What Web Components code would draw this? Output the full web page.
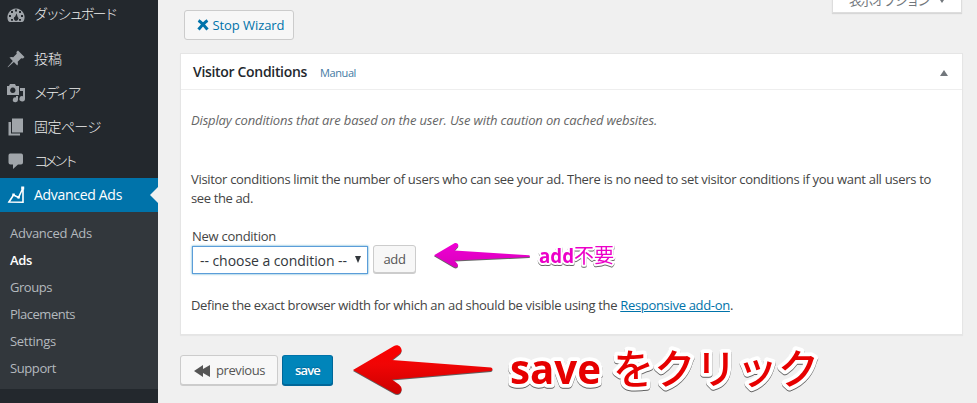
<!DOCTYPE html>
<html lang="ja">
<head>
<meta charset="utf-8">
<title>Visitor Conditions</title>
<style>
html,body{margin:0;height:100%;overflow:hidden;background:#f0f0f0}
body{font:13px/18px "Open Sans","Noto Sans CJK JP",sans-serif;color:#444}
</style>
</head>
<body>
<wizard-page></wizard-page>
<script>
const define = (name, html, setup) => customElements.define(name, class extends HTMLElement {
  constructor() {
    super();
    this.attachShadow({mode: 'open'}).innerHTML = html;
  }
  connectedCallback() { if (setup) setup(this, this.shadowRoot); }
});

/* A run of text whose tracking is adjusted to fill the width in "w". */
define('fit-text', `<style>:host{display:inline-block;white-space:nowrap;vertical-align:top}span{display:inline-block}</style><span><slot></slot></span>`, (el, root) => {
  const span = root.querySelector('span');
  const w = +el.getAttribute('w');
  el.style.width = w + 'px';
  const n = el.textContent.length;
  span.style.letterSpacing = (w - span.getBoundingClientRect().width) / n + 'px';
});

const icons = {
  dashboard: '<path fill-rule="evenodd" d="M2.3 17A8.6 8.6 0 1 1 17.7 17Q17 18 16 18H4Q3 18 2.3 17ZM9 5.4h2v2H9zM5 7h2v2H5zM13 7h2v2h-2zM3 11h2v2H3zM15 11h2v2h-2zM5 15h2v1.7H5zM13 15h2v1.7h-2zM10.6 9.3 9.2 12.5a2.2 2.2 0 1 0 2.5.4Z"/>',
  pin: '<path d="M10.4 3 12 1.5 18.5 8 17 9.6 15.2 9.3 11.7 12.8Q12.4 15 11.3 16.4L7.9 13 2 18.2 1.6 18 6.8 12 3.5 8.6Q5 7.5 7.2 8.2L10.7 4.8Z"/>',
  media: '<path fill-rule="evenodd" d="M1 3h2l1-2h5l1 2h3v9H1ZM6.8 4.6a2.7 2.7 0 1 0 .01 0ZM14 5h5v10.8a2.8 2.6 0 1 1-2-2.5V8h-3ZM10 13h2v3.7a2.6 2.4 0 1 1-2-2.3Z"/>',
  pages: '<path d="M6 1.500h11v14H6zM2.500 5H5v11.500h9v2H2.500z"/>',
  comment: '<path d="M4.2 2.500h11Q17 2.500 17 4.500v7Q17 13.500 15 13.500h-3L7 18v-4.500H4.500Q2.500 13.500 2.500 11.500v-7Q2.500 2.500 4.2 2.500Z"/>',
  chart: '<path fill="none" stroke="currentColor" stroke-width="1.6" d="M3 17 7.500 10l5 2.500L17 3v14.200ZM2 17.200h15.700"/><path d="M6.300 8.500h2.500v2.500H6.300zM11.300 11h2.500v2.500h-2.500zM15.200 1.500h3v3h-3z"/>'
};

define('menu-item', `<style>
:host{display:flex;height:34px;align-items:center;position:relative;color:#eee;font-size:14px;font-family:"Open Sans","Noto Sans CJK JP",sans-serif;flex:none}
:host(:not([current])){font-weight:300}
:host([current]){background:#0073aa;color:#fff}
:host([current])::after{content:"";position:absolute;right:0;top:9px;border:8px solid transparent;border-right-color:#f0f0f0;border-left:0}
svg{width:20px;height:20px;margin-left:6px;margin-right:8px;fill:currentColor;color:#a0a5aa}
:host([current]) svg{color:#fff}
</style><svg viewBox="0 0 20 20"></svg><slot></slot>`, (el, root) => {
  root.querySelector('svg').innerHTML = icons[el.getAttribute('icon')];
});

define('sub-item', `<style>
:host{display:block;height:27px;line-height:27px;padding-left:10px;color:#b4b9be;font-size:13px}
:host([current]){color:#fff;font-weight:600}
</style><slot></slot>`);

define('admin-menu', `<style>
:host{display:flex;flex-direction:column;width:158px;height:403px;flex:none;background:#23282d;overflow:hidden}
.gap{height:11px;flex:none}
.first{margin-top:-3px}
.sub{background:#32373c;padding:8px 0 7px}
</style>
<menu-item class="first" icon="dashboard"><fit-text w="82">ダッシュボード</fit-text></menu-item>
<div class="gap"></div>
<menu-item icon="pin"><fit-text w="28">投稿</fit-text></menu-item>
<menu-item icon="media"><fit-text w="45">メディア</fit-text></menu-item>
<menu-item icon="pages"><fit-text w="67">固定ページ</fit-text></menu-item>
<menu-item icon="comment"><fit-text w="40">コメント</fit-text></menu-item>
<menu-item icon="chart" current><fit-text w="88">Advanced Ads</fit-text></menu-item>
<div class="sub">
<sub-item><fit-text w="82">Advanced Ads</fit-text></sub-item>
<sub-item current><fit-text w="22">Ads</fit-text></sub-item>
<sub-item><fit-text w="42">Groups</fit-text></sub-item>
<sub-item><fit-text w="65">Placements</fit-text></sub-item>
<sub-item><fit-text w="46">Settings</fit-text></sub-item>
<sub-item><fit-text w="46">Support</fit-text></sub-item>
</div>`);

define('wp-button', `<style>
:host{display:inline-flex;box-sizing:border-box;align-items:center;justify-content:center;border:1px solid #ccc;border-radius:3px;background:#f7f7f7;box-shadow:0 1px 0 #ccc;color:#555;font-size:13px;flex:none}
:host([primary]){background:#0085ba;border-color:#0073aa #006799 #006799;box-shadow:0 1px 0 #006799;color:#fff;font-weight:600;text-shadow:0 -1px 1px #006799}
:host([link]){color:#0073aa;font-weight:500;box-shadow:none}
</style><slot></slot>`);

define('condition-select', `<style>
:host{display:flex;box-sizing:border-box;width:176px;height:28px;border:1px solid #5b9dd9;box-shadow:0 0 2px rgba(30,140,190,.8);background:#fff;align-items:center;justify-content:space-between;padding:1px 6px 0 7px;font-size:14px;color:#32373c}
i{width:0;border:3.5px solid transparent;border-top:7px solid #32373c;border-bottom:0;margin-bottom:2px}
</style><slot></slot><i></i>`);

define('meta-box', `<style>
:host{display:block;box-sizing:border-box;width:783px;height:282px;background:#fff;border:1px solid #e5e5e5;box-shadow:0 1px 1px rgba(0,0,0,.04)}
header{display:flex;box-sizing:border-box;height:36px;border-bottom:1px solid #eee;align-items:center;padding:0 14px 0 12px}
h2{margin:1px 13px 0 0;font-size:14px;font-weight:550;line-height:18px;color:#23282d}
header a{font-size:11px;color:#447aa3;margin-top:3px;flex:1}
header i{border:4px solid transparent;border-bottom:6px solid #72777c;border-top:0;margin-top:3px}
.body{padding:0 10px}
p{margin:0;line-height:19px}
.note{margin-top:21px;font-style:italic;color:#666}
.intro{margin-top:40px}
.label{margin:19px 0 0 1px;line-height:18px}
.row{display:flex;gap:5px;margin:1px 0 0 1px}
.row wp-button{width:43px;height:28px;margin-top:-1px}
.end{margin-top:22px}
.end a{color:#0073aa;text-decoration:underline}
</style>
<header><h2><fit-text w="114">Visitor Conditions</fit-text></h2><a><fit-text w="36">Manual</fit-text></a><i></i></header>
<div class="body">
<p class="note"><fit-text w="466">Display conditions that are based on the user. Use with caution on cached websites.</fit-text></p>
<p class="intro"><fit-text w="740">Visitor conditions limit the number of users who can see your ad. There is no need to set visitor conditions if you want all users to</fit-text><br><fit-text w="62">see the ad.</fit-text></p>
<p class="label"><fit-text w="84">New condition</fit-text></p>
<div class="row"><condition-select><fit-text w="147">-- choose a condition --</fit-text></condition-select><wp-button><fit-text w="22">add</fit-text></wp-button></div>
<p class="end"><fit-text w="542">Define the exact browser width for which an ad should be visible using the <a>Responsive add-on</a>.</fit-text></p>
</div>`);

define('screen-options', `<style>
:host{display:flex;box-sizing:border-box;width:130px;height:28px;background:#fff;border:1px solid #ddd;border-top:0;box-shadow:0 1px 1px rgba(0,0,0,.1);align-items:center;padding:2px 15px 0 16px;justify-content:space-between;color:#72777c}
i{border:4px solid transparent;border-top:6px solid #72777c;border-bottom:0}
</style><fit-text w="80">表示オプション</fit-text><i></i>`);

/* Callouts drawn over the page: two arrows and two outlined captions. */
define('page-callouts', `<style>
:host{position:absolute;inset:0;pointer-events:none}
svg{display:block}
text{font-family:"Open Sans","Noto Sans CJK JP",sans-serif;font-weight:700;paint-order:stroke;stroke:#fff;stroke-linejoin:round}
.jp{font-family:"Noto Sans CJK JP",sans-serif;font-weight:500}
.thin{font-weight:400}
.sh{filter:drop-shadow(.5px 1px .6px rgba(0,0,0,.6))}
</style>
<svg width="977" height="403" viewBox="0 0 977 403">
<defs>
<linearGradient id="r" x1="0" y1="0" x2="0" y2="1"><stop offset="0" stop-color="#fb0000"/><stop offset=".4" stop-color="#f00505"/><stop offset="1" stop-color="#cc0000"/></linearGradient>
<linearGradient id="m" x1="0" y1="0" x2="0" y2="1"><stop offset="0" stop-color="#f000d4"/><stop offset="1" stop-color="#d900bc"/></linearGradient>
</defs>
<path class="sh" fill="url(#r)" d="M353 370 L394 346 C398 344 402 347 401.500 351 Q401 353 399 354.500 L392 360 L491 367.500 Q494 369 491 371 L392 379.500 L399 384.500 Q402 387 401.500 390 C401 394 397 395 394 393Z"/>
<path class="sh" fill="url(#m)" d="M434 255.300 L454 243.500 C457 242 459 244.500 458 246.500 L454.500 250.500 L529 255.300 Q531 256.200 529 257 L454.500 260.500 L457.500 264 C459 267 456 268 454 267Z"/>
<g class="sh" fill="#ec00c8" stroke-width="4"><text x="539" y="263" font-size="19" textLength="35" lengthAdjust="spacingAndGlyphs">add</text><text class="jp thin" x="574" y="263" font-size="20" textLength="40">不要</text></g>
<g class="sh" fill="#e60000" stroke-width="7.500"><text x="510" y="384" font-size="42" textLength="91" lengthAdjust="spacingAndGlyphs">save</text><text class="jp" x="613" y="383.500" font-size="41" textLength="206">をクリック</text></g>
</svg>`);

define('wizard-page', `<style>
:host{display:flex;position:relative;width:977px;height:403px;overflow:hidden}
main{flex:1;padding-left:22px}
.top{display:flex;justify-content:space-between;padding:0 15px 0 4px;height:53px}
.top screen-options{margin-top:-15px}
.stop{width:110px;height:30px;margin-top:10px}
.stop svg{width:12px;height:12px;margin-right:4px}
.stop{padding-left:3px}
.actions{display:flex;gap:4px;margin-top:20px}
.prev{width:98px;height:30px;padding-left:1px}
.prev svg{width:17px;height:12px;margin:2px 5px 0 0}
.save{width:51px;height:30px}
</style>
<admin-menu></admin-menu>
<main>
<div class="top">
<wp-button link class="stop"><svg viewBox="0 0 12 12"><path d="M1.500 1.500C4 3 8 7.500 10.500 10.500M10.500 1.500C8 3 4 7.500 1.500 10.500" fill="none" stroke="#0073aa" stroke-width="3"/></svg><fit-text w="72">Stop Wizard</fit-text></wp-button>
<screen-options></screen-options>
</div>
<meta-box></meta-box>
<div class="actions">
<wp-button class="prev"><svg viewBox="0 0 17 12"><path d="M0 6 9 0v4l7-4v12L9 8v4Z" fill="#555"/></svg><fit-text w="49">previous</fit-text></wp-button>
<wp-button primary class="save"><fit-text w="25">save</fit-text></wp-button>
</div>
</main>
<page-callouts></page-callouts>`);
</script>
</body>
</html>
